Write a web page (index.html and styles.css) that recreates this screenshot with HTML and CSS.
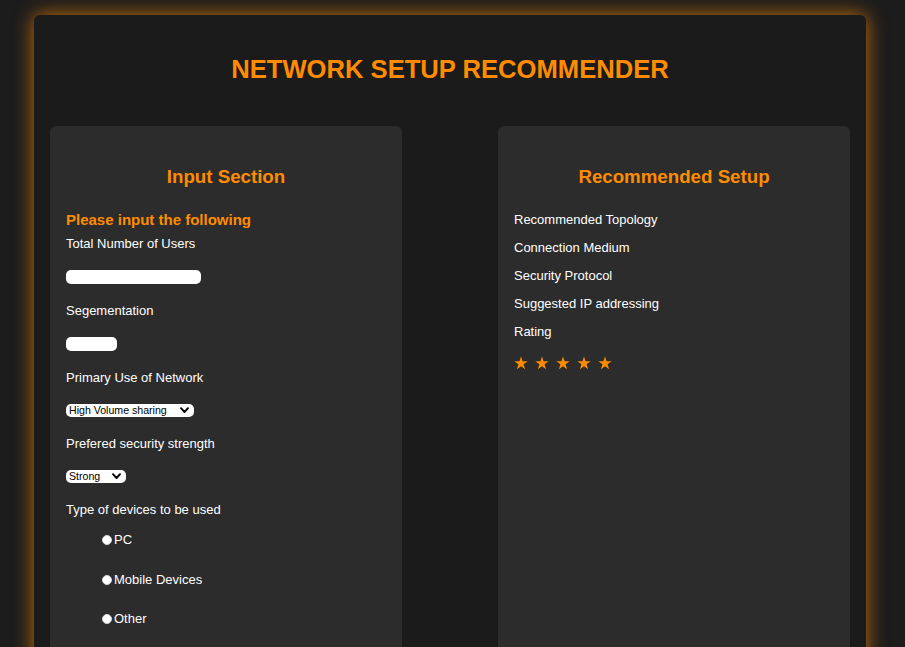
FILE: index.html
```html
<!DOCTYPE html>
<html lang="en">
<head>
<meta charset="utf-8">
<title>Network Setup Recommender</title>
<link rel="stylesheet" href="styles.css">
</head>
<body>
<div class="container">
  <h1 class="title">NETWORK SETUP RECOMMENDER</h1>
  <div class="columns">
    <section class="panel">
      <h3 class="panel-title">Input Section</h3>
      <h4 class="subhead">Please input the following</h4>
      <div class="field">
        <label class="label" for="users">Total Number of Users</label>
        <input class="text-input input-wide" id="users" type="text">
      </div>
      <div class="field">
        <label class="label" for="seg">Segementation</label>
        <input class="text-input input-narrow" id="seg" type="text">
      </div>
      <div class="field">
        <label class="label" for="use">Primary Use of Network</label>
        <span class="select-wrap select-wide">
          <select class="select" id="use">
            <option>High Volume sharing</option>
            <option>Browsing</option>
          </select>
          <svg class="chevron" width="9" height="7" viewBox="0 0 9 7"><path d="M1 1.2 L4.5 5 L8 1.2" fill="none" stroke="#000" stroke-width="1.9" stroke-linecap="round" stroke-linejoin="round"/></svg>
        </span>
      </div>
      <div class="field">
        <label class="label" for="sec">Prefered security strength</label>
        <span class="select-wrap select-narrow">
          <select class="select" id="sec">
            <option>Strong</option>
            <option>Medium</option>
            <option>Weak</option>
          </select>
          <svg class="chevron" width="9" height="7" viewBox="0 0 9 7"><path d="M1 1.2 L4.5 5 L8 1.2" fill="none" stroke="#000" stroke-width="1.9" stroke-linecap="round" stroke-linejoin="round"/></svg>
        </span>
      </div>
      <div class="field">
        <span class="label">Type of devices to be used</span>
        <div class="radios">
          <label class="radio-row"><input class="radio" type="radio" name="dev">PC</label>
          <label class="radio-row"><input class="radio" type="radio" name="dev">Mobile Devices</label>
          <label class="radio-row"><input class="radio" type="radio" name="dev">Other</label>
        </div>
      </div>
    </section>
    <section class="panel">
      <h3 class="panel-title">Recommended Setup</h3>
      <div class="results">
        <p class="result">Recommended Topology</p>
        <p class="result">Connection Medium</p>
        <p class="result">Security Protocol</p>
        <p class="result">Suggested IP addressing</p>
        <p class="result">Rating</p>
        <div class="stars">
          <svg class="star" width="14" height="14" viewBox="0 0 14 14"><path d="M7 0.5 L8.572 5.337 L13.657 5.337 L9.543 8.326 L11.114 13.163 L7 10.174 L2.886 13.163 L4.457 8.326 L0.343 5.337 L5.428 5.337 Z"/></svg>
          <svg class="star" width="14" height="14" viewBox="0 0 14 14"><path d="M7 0.5 L8.572 5.337 L13.657 5.337 L9.543 8.326 L11.114 13.163 L7 10.174 L2.886 13.163 L4.457 8.326 L0.343 5.337 L5.428 5.337 Z"/></svg>
          <svg class="star" width="14" height="14" viewBox="0 0 14 14"><path d="M7 0.5 L8.572 5.337 L13.657 5.337 L9.543 8.326 L11.114 13.163 L7 10.174 L2.886 13.163 L4.457 8.326 L0.343 5.337 L5.428 5.337 Z"/></svg>
          <svg class="star" width="14" height="14" viewBox="0 0 14 14"><path d="M7 0.5 L8.572 5.337 L13.657 5.337 L9.543 8.326 L11.114 13.163 L7 10.174 L2.886 13.163 L4.457 8.326 L0.343 5.337 L5.428 5.337 Z"/></svg>
          <svg class="star" width="14" height="14" viewBox="0 0 14 14"><path d="M7 0.5 L8.572 5.337 L13.657 5.337 L9.543 8.326 L11.114 13.163 L7 10.174 L2.886 13.163 L4.457 8.326 L0.343 5.337 L5.428 5.337 Z"/></svg>
        </div>
      </div>
    </section>
  </div>
</div>
</body>
</html>
```
FILE: styles.css
```css
html, body {
  margin: 0;
  padding: 0;
  background: #1c1c1c;
  overflow: hidden;
}
body {
  padding: 15px 39px 0 34px;
  font-family: "Liberation Sans", Arial, sans-serif;
  color: #ffffff;
}
.container {
  background: #1b1b1b;
  border-radius: 6px;
  box-shadow: 0 0 20px rgba(255, 140, 0, 0.75);
  padding: 16px;
}
.title {
  margin: 23px 0 42px;
  font-size: 25.6px;
  line-height: 30px;
  font-weight: bold;
  text-align: center;
  color: #ff8c00;
}
.columns {
  display: flex;
  justify-content: space-between;
}
.panel {
  width: 320px;
  background: #2c2c2c;
  border-radius: 6px;
  padding: 20px 16px 40px;
}
.panel-title {
  margin: 20px 0 23px;
  font-size: 18.72px;
  line-height: 22px;
  font-weight: bold;
  text-align: center;
  color: #ff8c00;
}
.subhead {
  margin: 0;
  font-size: 15px;
  line-height: 17px;
  font-weight: bold;
  color: #ff8c00;
}
.field {
  display: flex;
  flex-direction: column;
  align-items: flex-start;
  margin-top: 19px;
}
.field:first-of-type {
  margin-top: 8px;
}
.label {
  display: block;
  font-size: 13px;
  line-height: 16px;
  margin-bottom: 18px;
}
.text-input {
  box-sizing: border-box;
  height: 14px;
  border: none;
  border-radius: 5px;
  background: #ffffff;
  padding: 0 4px;
  margin: 0;
  outline: none;
}
.input-wide { width: 135px; }
.input-narrow { width: 51px; }
.select-wrap {
  position: relative;
  display: block;
  height: 13px;
}
.select-wide { width: 128px; }
.select-narrow { width: 60px; }
.select {
  appearance: none;
  -webkit-appearance: none;
  box-sizing: border-box;
  display: block;
  width: 100%;
  height: 13px;
  margin: 0;
  padding: 0 0 0 3px;
  border: none;
  border-radius: 5px;
  background: #ffffff;
  color: #000000;
  font-family: "Liberation Sans", Arial, sans-serif;
  font-size: 10.6px;
  line-height: 13px;
  outline: none;
}
.chevron {
  position: absolute;
  right: 5px;
  top: 3px;
  pointer-events: none;
}
.radios {
  display: flex;
  flex-direction: column;
  gap: 23.5px;
  margin: -4px 0 0 36px;
}
.radio-row {
  display: flex;
  align-items: center;
  font-size: 13px;
  line-height: 16px;
}
.radio {
  appearance: none;
  -webkit-appearance: none;
  width: 10px;
  height: 10px;
  margin: 0 2px 0 0;
  border-radius: 50%;
  background: #ffffff;
  border: 1px solid #d8d8d8;
  box-sizing: border-box;
}
.results {
  padding-top: 1px;
}
.result {
  margin: 0 0 12px;
  font-size: 13px;
  line-height: 16px;
}
.stars {
  display: flex;
  gap: 7px;
  height: 22px;
  align-items: center;
}
.star {
  display: block;
  fill: #ff8c00;
}
```
